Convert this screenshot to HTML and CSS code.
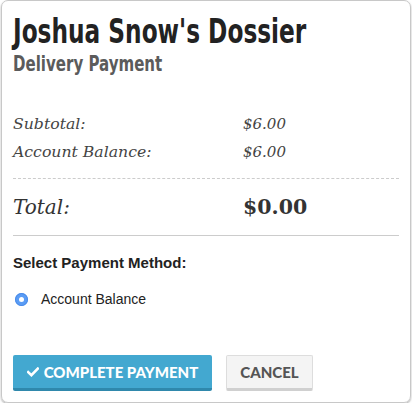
FILE: index.html
```html
<!DOCTYPE html>
<html>
<head>
<meta charset="utf-8">
<link rel="stylesheet" href="styles.css">
</head>
<body>
<div class="card">
  <h1 class="title">Joshua Snow's Dossier</h1>
  <h2 class="subtitle">Delivery Payment</h2>
  <div class="summary">
    <div class="row"><span class="label">Subtotal:</span><span class="amount">$6.00</span></div>
    <div class="row"><span class="label">Account Balance:</span><span class="amount">$6.00</span></div>
  </div>
  <div class="total row">
    <span class="label">Total:</span><span class="amount">$0.00</span>
  </div>
  <div class="method">
    <div class="method-title">Select Payment Method:</div>
    <label class="option"><span class="radio"></span><span>Account Balance</span></label>
  </div>
  <div class="actions">
    <button class="btn btn-primary"><svg class="check" width="12" height="10" viewBox="0 0 12 10"><path d="M1.2 5.2 L4.4 8.2 L10.8 1.6" fill="none" stroke="#fff" stroke-width="2.6" stroke-linecap="square"/></svg>COMPLETE PAYMENT</button>
    <button class="btn btn-default">CANCEL</button>
  </div>
</div>
</body>
</html>
```
FILE: styles.css
```css
html, body { margin: 0; padding: 0; background: #fff; }
.card {
  box-sizing: border-box;
  width: 410px;
  height: 403px;
  margin-left: 1px;
  border: 1px solid #c8c8c8;
  border-radius: 7px;
  box-shadow: 0 1px 2px rgba(0,0,0,0.35);
  padding: 11px 11px 0 11px;
  display: flex;
  flex-direction: column;
}
.title {
  margin: 0;
  width: max-content;
  font-family: "DejaVu Sans Condensed", sans-serif;
  font-weight: 700;
  font-size: 34px;
  line-height: 38px;
  color: #222;
  white-space: nowrap;
  transform: scaleX(0.76);
  transform-origin: left center;
}
.subtitle {
  margin: 1px 0 0 0;
  width: max-content;
  font-family: "DejaVu Sans Condensed", sans-serif;
  font-weight: 700;
  font-size: 22px;
  line-height: 26px;
  color: #5b5b5b;
  white-space: nowrap;
  transform: scaleX(0.76);
  transform-origin: left center;
}
.summary { margin-top: 33px; padding-bottom: 12px; border-bottom: 1px dashed #ccc; }
.row {
  display: grid;
  grid-template-columns: 230px auto;
  font-family: "DejaVu Serif", "Liberation Serif", serif;
  font-style: italic;
  color: #444;
  font-size: 15.7px;
  line-height: 28px;
}
.amount { font-size: 15px; }
.total {
  padding: 13px 0 13px 0;
  border-bottom: 1px solid #ccc;
  font-size: 20px;
  line-height: 30px;
  color: #333;
}
.total .amount { font-style: normal; font-weight: 700; font-size: 20.5px; }
.method { margin-top: 17px; font-family: "Liberation Sans", Arial, sans-serif; color: #222; }
.method-title { font-weight: 700; font-size: 15px; line-height: 20px; }
.option { display: flex; align-items: center; gap: 13px; margin-top: 16px; margin-left: 2px; font-size: 14px; line-height: 20px; }
.radio {
  width: 13px; height: 13px; border-radius: 50%;
  background: #5a9cf5;
  box-shadow: inset 0 0 0 1px #4a8be8;
  display: flex; align-items: center; justify-content: center;
}
.radio::after { content: ""; width: 5px; height: 5px; border-radius: 50%; background: #fff; }
.actions { display: flex; gap: 14px; margin-top: 46px; }
.btn {
  font-family: Lato, "Open Sans", sans-serif;
  font-weight: 900;
  font-size: 15px;
  height: 36px;
  border-radius: 2px;
  padding: 0;
  display: flex; align-items: center; justify-content: center; gap: 5px;
  white-space: nowrap;
  cursor: pointer;
}
.btn-primary {
  width: 199px;
  color: #fff;
  background: #43a8d0;
  border: none;
  border-bottom: 3px solid #2f88ac;
}
.btn-default {
  width: 87px;
  color: #555;
  background: #f4f4f4;
  border: 1px solid #ddd;
  border-bottom: 3px solid #d0d0d0;
}
```
